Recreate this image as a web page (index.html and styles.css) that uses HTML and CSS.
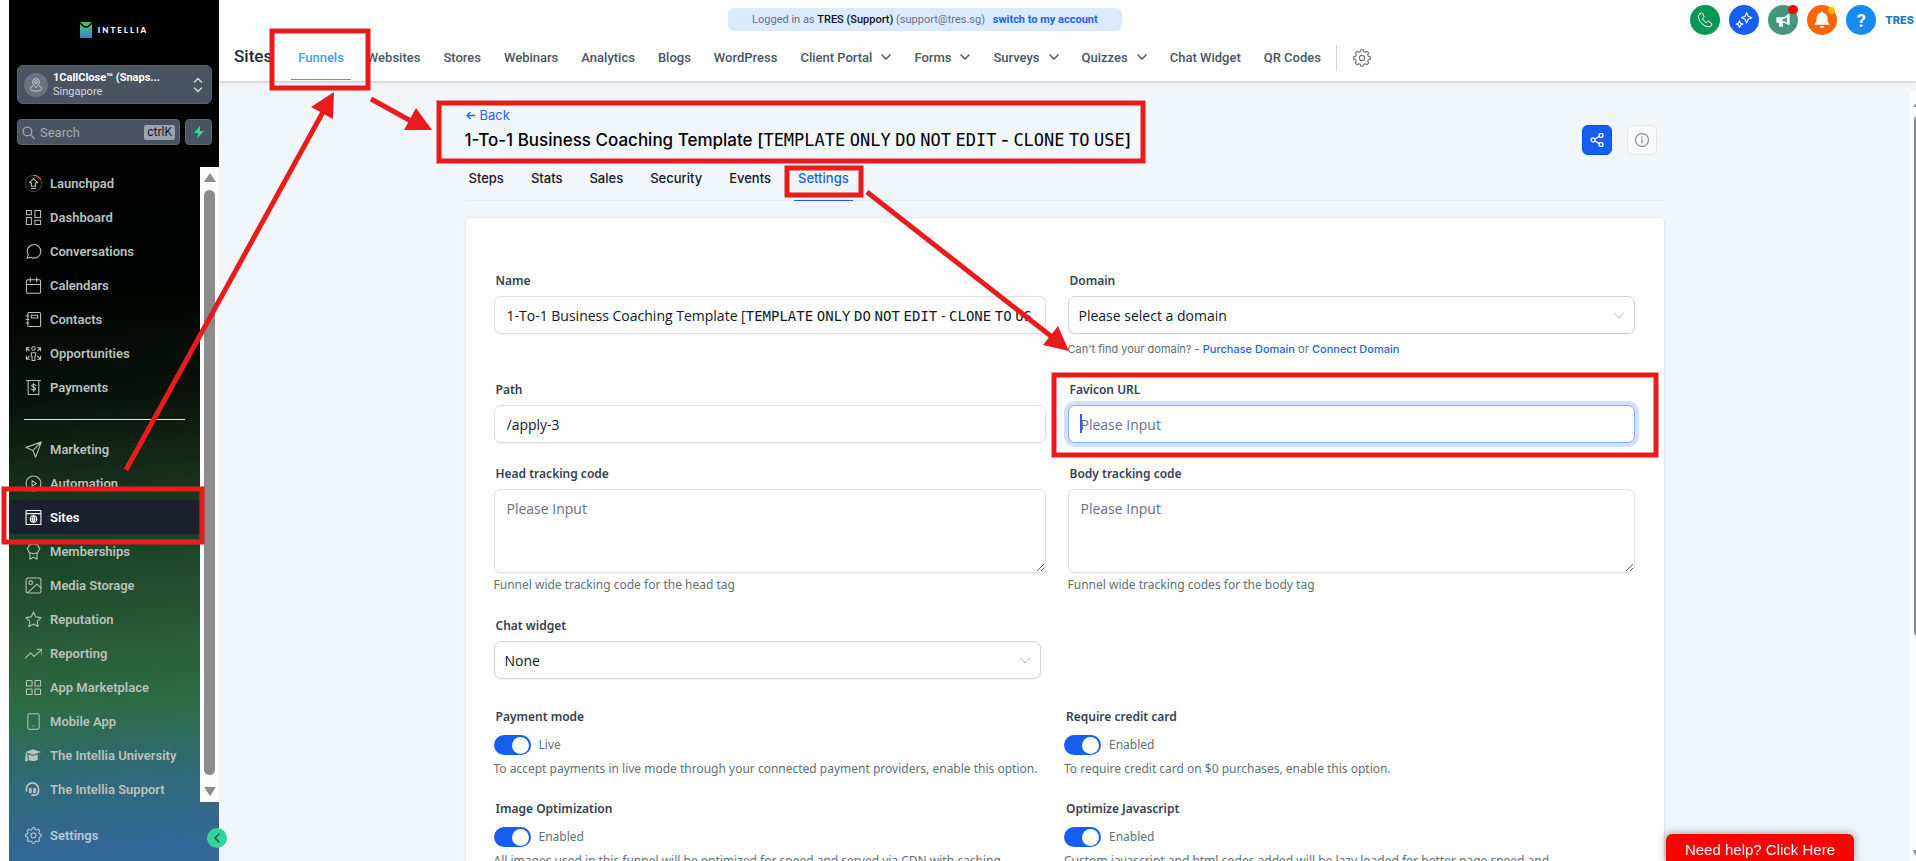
FILE: index.html
```
<!DOCTYPE html>
<html lang="en">
<head>
  <meta charset="UTF-8">
  <meta name="viewport" content="width=device-width, initial-scale=1.0">
  <title>Funnel Settings</title>
  <link rel="stylesheet" href="styles.css">
</head>
<body>
  <div class="app">
    <!-- Sidebar -->
    <aside class="sidebar">
      <div class="logo">
        <svg width="12" height="16" viewBox="0 0 12 16">
          <defs>
            <linearGradient id="logo-fill" x1="0" y1="0" x2="0" y2="1">
              <stop offset="0" stop-color="#4fc26b"/>
              <stop offset="1" stop-color="#3a7fd0"/>
            </linearGradient>
          </defs>
          <path d="M0 0h12l-4 4H4z" fill="#4cb96a"/>
          <path d="M0 2l4 3.500h4L12 2v14H0z" fill="url(#logo-fill)"/>
          <path d="M0 1l4 3.500h4L12 1" fill="none" stroke="#000"/>
        </svg>
        <span>INTELLIA</span>
      </div>

      <button class="account" type="button">
        <span class="account-pin">
          <svg class="icon" width="14" height="14" viewBox="0 0 24 24"><path d="M12 16s-6-4.500-6-9a6 6 0 0 1 12 0c0 4.500-6 9-6 9z"/><circle cx="12" cy="7" r="2.500"/><path d="M6.500 14C3.500 15 2 16.300 2 18c0 2.800 4.500 4.500 10 4.500S22 20.800 22 18c0-1.700-1.500-3-4.500-4"/></svg>
        </span>
        <span class="account-text">
          <strong>1CallClose™ (Snaps...</strong>
          <small>Singapore</small>
        </span>
        <svg class="icon account-arrows" width="10" height="16" viewBox="0 0 10 16"><path d="M1.500 5L5 1.500 8.500 5M1.500 11L5 14.500 8.500 11"/></svg>
      </button>

      <div class="search-row">
        <label class="search">
          <svg class="icon" width="13" height="13" viewBox="0 0 24 24"><circle cx="10" cy="10" r="8"/><path d="M16 16l7 7"/></svg>
          <input type="text" placeholder="Search" aria-label="Search">
          <kbd>ctrlK</kbd>
        </label>
        <button class="bolt" type="button" aria-label="Quick actions">
          <svg width="12" height="12" viewBox="0 0 12 12"><path d="M7 0L1 7h4l-.5 5L11 5H7z" fill="#34d399"/></svg>
        </button>
      </div>

      <div class="side-scroll">
        <nav class="side-nav">
          <a href="#"><svg class="icon" viewBox="0 0 24 24"><circle cx="12" cy="12" r="11.500" stroke="#3b3b3b"/><path d="M12 .5a11.500 11.500 0 0 1 10 6" stroke="#c9752d"/><path d="M12 5l6 6h-3v5H9v-5H6zM9 19h6"/></svg>Launchpad</a>
          <a href="#"><svg class="icon" viewBox="0 0 24 24"><path d="M2 2h7v6H2zM14 2h8v10h-8zM2 12h7v10H2zM14 16h8v6h-8z"/></svg>Dashboard</a>
          <a href="#"><svg class="icon" viewBox="0 0 24 24"><path d="M3 21.500l1.500-5A9.500 9.500 0 1 1 8 20z"/></svg>Conversations</a>
          <a href="#"><svg class="icon" viewBox="0 0 24 24"><rect x="2" y="4" width="20" height="19" rx="2"/><path d="M2 10.500h20M7.500 1v6M16.500 1v6"/></svg>Calendars</a>
          <a href="#"><svg class="icon" viewBox="0 0 24 24"><rect x="4" y="2" width="18" height="20" rx="1.500"/><rect x="9" y="6" width="9" height="4"/><path d="M1.500 7h4M1.500 12h4M1.500 17h4"/></svg>Contacts</a>
          <a href="#"><svg class="icon" viewBox="0 0 24 24"><circle cx="12" cy="5" r="2.500"/><path d="M9 11h6v5h-1v6h-4v-6H9zM2 8V4h4M2 4l4 4M22 8V4h-4M22 4l-4 4M2 16v4h4M2 20l4-4M22 16v4h-4M22 20l-4-4"/></svg>Opportunities</a>
          <a href="#"><svg class="icon" viewBox="0 0 24 24"><path d="M2 2h20M4.500 2v20h15V2M15 9c-.8-1.600-5.500-1.800-5.500.700 0 2.800 5.500 1.300 5.500 4 0 2.600-5 2.400-5.700.500M12.200 6.500v11"/></svg>Payments</a>
        </nav>
        <hr>
        <nav class="side-nav">
          <a href="#"><svg class="icon" viewBox="0 0 24 24"><path d="M1.500 9L23 1.500 15 23l-4-9.500zM11 13.500l12-12"/></svg>Marketing</a>
          <a href="#"><svg class="icon" viewBox="0 0 24 24"><circle cx="12" cy="12" r="10.500"/><path d="M10 8l6 4-6 4z"/></svg>Automation</a>
          <a href="#" class="active"><svg class="icon" viewBox="0 0 24 24"><path d="M1.500 2h21v20h-21zM1.500 6.500h21"/><circle cx="12" cy="14" r="4.500"/><path d="M7.500 14h9M12 9.500c-2 3-2 6 0 9M12 9.500c2 3 2 6 0 9"/></svg>Sites</a>
          <a href="#"><svg class="icon" viewBox="0 0 24 24"><path d="M12 1l3 1.500h3l1 3 2 2.500-2 3-1 3h-3l-3 1.500L9 14H6l-1-3-2-3 2-2.500 1-3h3zM7 14v9l5-3 5 3v-9"/></svg>Memberships</a>
          <a href="#"><svg class="icon" viewBox="0 0 24 24"><rect x="1.500" y="1.500" width="21" height="21" rx="3"/><circle cx="8" cy="8" r="2.500"/><path d="M4 22L17 10l5.500 5.500"/></svg>Media Storage</a>
          <a href="#"><svg class="icon" viewBox="0 0 24 24"><path d="M12 1.500l3.200 6.800 7.300 1-5.300 5.200 1.300 7.500-6.500-3.600L5.500 22l1.300-7.500L1.500 9.300l7.300-1z"/></svg>Reputation</a>
          <a href="#"><svg class="icon" viewBox="0 0 24 24"><path d="M0 19l8-8 5 5L24 6M17 6h7v7"/></svg>Reporting</a>
          <a href="#"><svg class="icon" viewBox="0 0 24 24"><rect x="2" y="2" width="8" height="8" rx="1"/><rect x="14" y="2" width="8" height="8" rx="1"/><rect x="2" y="14" width="8" height="8" rx="1"/><rect x="14" y="14" width="8" height="8" rx="1"/></svg>App Marketplace</a>
          <a href="#"><svg class="icon" viewBox="0 0 24 24"><rect x="4" y="1" width="16" height="22" rx="2.500"/><path d="M11.500 18h1"/></svg>Mobile App</a>
          <a href="#"><svg class="icon solid" viewBox="0 0 24 24"><path d="M11 3l12 4-12 4L1 7z"/><path d="M5 10.500l6 2 7-2V18c-3 2.500-10 2.500-13 0zM1 8h2l1 12H0z"/></svg>The Intellia University</a>
          <a href="#"><svg class="icon" viewBox="0 0 24 24"><path d="M2 14v-3a8.500 8.500 0 0 1 17 0v3c0 4-2 6-6 6h-3" stroke-width="2.500"/><path d="M7.500 11.500v4M13.500 11.500v4" stroke-width="4"/></svg>The Intellia Support</a>
        </nav>
        <div class="side-bar">
          <span class="bar-up"></span>
          <span class="bar-thumb"></span>
          <span class="bar-down"></span>
        </div>
      </div>

      <nav class="side-nav side-footer">
        <a href="#"><svg class="icon" viewBox="0 0 24 24"><circle cx="12" cy="12" r="3.500"/><path d="M9.700 3.500L10.500 1h3l.8 2.500 2 .9 2.400-1.300 2.200 2.200-1.300 2.400.9 2 2.500.8v3l-2.500.8-.9 2 1.300 2.400-2.200 2.200-2.400-1.300-2 .9-.8 2.500h-3l-.8-2.500-2-.9-2.400 1.300-2.200-2.200 1.300-2.400-.9-2L1 13.500v-3l2.500-.8.9-2-1.300-2.400 2.200-2.200 2.400 1.300z"/></svg>Settings</a>
      </nav>
      <button class="collapse" type="button" aria-label="Collapse sidebar">
        <svg class="icon" width="8" height="10" viewBox="0 0 8 10"><path d="M6 1L2 5l4 4"/></svg>
      </button>
    </aside>

    <div class="page">
      <!-- Header -->
      <header class="header">
        <div class="top-row">
          <p class="login-note">Logged in as <b>TRES (Support)</b> (support@tres.sg) <a href="#">switch to my account</a></p>
          <div class="actions">
            <button class="round green" type="button" aria-label="Phone"><svg class="icon" width="16" height="16" viewBox="0 0 24 24"><path d="M4 3l3-1.500c1 0 1.500.5 2 1.500l1.500 3.500c.3 1-.2 1.600-1 2.300-.8.700-1 1.200-.5 2.200 1 2 2.300 3.400 4.200 4.300 1 .5 1.500.2 2.200-.6.700-.8 1.300-1.200 2.300-.8L21 16.500c1 .5 1.500 1 1.300 2-.3 2-1.800 3.800-4.300 3.800C9.500 22 2 14 2 6c0-1.300.7-2.300 2-3z"/></svg></button>
            <button class="round blue" type="button" aria-label="AI"><svg class="icon" width="18" height="18" viewBox="0 0 24 24"><path d="M15.500 2l2 5 5 2-5 2-2 5-2-5-5-2 5-2zM6 13l1.300 3.200L10.500 17.500l-3.200 1.300L6 22l-1.300-3.200L1.500 17.500l3.200-1.300z"/></svg></button>
            <button class="round teal" type="button" aria-label="Announcements"><svg class="icon solid" width="16" height="16" viewBox="0 0 24 24"><path fill-rule="evenodd" d="M2 8h8c4 0 7-2 9-5h3v16h-3c-2-2-4-3-7-3v6H6v-6H2zM11 11v3c3 0 5 .7 7 2V8c-2 2-4 3-7 3z"/></svg><i class="dot red"></i></button>
            <button class="round orange" type="button" aria-label="Notifications"><svg class="icon solid" width="16" height="18" viewBox="0 0 24 26"><path d="M10 2a2 2 0 0 1 4 0c4 1 6 4 6 8 0 5 1 7 3 9v1H1v-1c2-2 3-4 3-9 0-4 2-7 6-8zM8.500 22.500h7c-.5 3-6.500 3-7 0z"/></svg><i class="dot yellow"></i></button>
            <button class="round sky" type="button" aria-label="Help">?</button>
            <span class="brand">TRES</span>
          </div>
        </div>
        <div class="nav-row">
          <h2>Sites</h2>
          <nav class="main-nav">
            <a href="#" class="active">Funnels</a>
            <a href="#">Websites</a>
            <a href="#">Stores</a>
            <a href="#">Webinars</a>
            <a href="#">Analytics</a>
            <a href="#">Blogs</a>
            <a href="#">WordPress</a>
            <a href="#">Client Portal <svg class="icon" width="10" height="7" viewBox="0 0 10 7"><path d="M1 1l4 4 4-4"/></svg></a>
            <a href="#">Forms <svg class="icon" width="10" height="7" viewBox="0 0 10 7"><path d="M1 1l4 4 4-4"/></svg></a>
            <a href="#">Surveys <svg class="icon" width="10" height="7" viewBox="0 0 10 7"><path d="M1 1l4 4 4-4"/></svg></a>
            <a href="#">Quizzes <svg class="icon" width="10" height="7" viewBox="0 0 10 7"><path d="M1 1l4 4 4-4"/></svg></a>
            <a href="#">Chat Widget</a>
            <a href="#">QR Codes</a>
          </nav>
          <button class="gear" type="button" aria-label="Site settings">
            <svg class="icon" width="18" height="18" viewBox="0 0 24 24"><circle cx="12" cy="12" r="3.500"/><path d="M9.700 3.500L10.500 1h3l.8 2.500 2 .9 2.400-1.300 2.200 2.200-1.300 2.400.9 2 2.500.8v3l-2.500.8-.9 2 1.300 2.400-2.200 2.200-2.400-1.300-2 .9-.8 2.500h-3l-.8-2.500-2-.9-2.400 1.300-2.200-2.200 1.300-2.400-.9-2L1 13.500v-3l2.500-.8.9-2-1.300-2.400 2.200-2.200 2.400 1.300z"/></svg>
          </button>
        </div>
      </header>

      <!-- Funnel -->
      <div class="scroller">
        <main class="content">
          <div class="title-row">
            <div>
              <a href="#" class="back"><svg class="icon" width="9" height="9" viewBox="0 0 9 9"><path d="M8.500 4.500H1M4 1.500l-3 3 3 3"/></svg>Back</a>
              <h1>1-To-1 Business Coaching Template [𝚃𝙴𝙼𝙿𝙻𝙰𝚃𝙴 𝙾𝙽𝙻𝚈 𝙳𝙾 𝙽𝙾𝚃 𝙴𝙳𝙸𝚃 - 𝙲𝙻𝙾𝙽𝙴 𝚃𝙾 𝚄𝚂𝙴]</h1>
            </div>
            <div class="title-buttons">
              <button class="square share" type="button" aria-label="Share"><svg class="icon" width="14" height="14" viewBox="0 0 14 14"><circle cx="3" cy="7" r="2"/><circle cx="11" cy="2.500" r="2"/><circle cx="11" cy="11.500" r="2"/><path d="M5 6l4-2.500M5 8l4 2.500"/></svg></button>
              <button class="square info" type="button" aria-label="Info"><svg class="icon" width="14" height="14" viewBox="0 0 14 14"><circle cx="7" cy="7" r="6.500"/><path d="M7 6.500v3.500M7 4v.5"/></svg></button>
            </div>
          </div>

          <nav class="tabs">
            <a href="#">Steps</a>
            <a href="#">Stats</a>
            <a href="#">Sales</a>
            <a href="#">Security</a>
            <a href="#">Events</a>
            <a href="#" class="active">Settings</a>
          </nav>

          <form class="card">
            <div class="fields">
              <div class="field">
                <label for="name">Name</label>
                <input id="name" type="text" value="1-To-1 Business Coaching Template [𝚃𝙴𝙼𝙿𝙻𝙰𝚃𝙴 𝙾𝙽𝙻𝚈 𝙳𝙾 𝙽𝙾𝚃 𝙴𝙳𝙸𝚃 - 𝙲𝙻𝙾𝙽𝙴 𝚃𝙾 𝚄𝚂𝙴]">
              </div>
              <div class="field">
                <label for="domain">Domain</label>
                <div class="select">
                  <select id="domain"><option>Please select a domain</option></select>
                  <svg class="icon" width="10" height="7" viewBox="0 0 10 7"><path d="M.5 1L5 6l4.500-5"/></svg>
                </div>
                <p class="domain-hint">Can't find your domain? - <a href="#">Purchase Domain</a> or <a href="#">Connect Domain</a></p>
              </div>
              <div class="field">
                <label for="path">Path</label>
                <input id="path" type="text" value="/apply-3">
              </div>
              <div class="field focused">
                <label for="favicon">Favicon URL</label>
                <div class="caret-box">
                  <input id="favicon" type="text" placeholder="Please Input">
                  <span class="caret"></span>
                </div>
              </div>
              <div class="field">
                <label for="head-code">Head tracking code</label>
                <textarea id="head-code" placeholder="Please Input"></textarea>
                <p class="hint">Funnel wide tracking code for the head tag</p>
              </div>
              <div class="field">
                <label for="body-code">Body tracking code</label>
                <textarea id="body-code" placeholder="Please Input"></textarea>
                <p class="hint">Funnel wide tracking codes for the body tag</p>
              </div>
            </div>

            <div class="options">
              <div class="field wide-row">
                <label for="chat">Chat widget</label>
                <div class="select">
                  <select id="chat"><option>None</option></select>
                  <svg class="icon" width="10" height="7" viewBox="0 0 10 7"><path d="M.5 1L5 6l4.500-5"/></svg>
                </div>
              </div>
              <div class="option">
                <label for="payment">Payment mode</label>
                <div class="toggle"><input id="payment" type="checkbox" checked><span>Live</span></div>
                <p class="hint">To accept payments in live mode through your connected payment providers, enable this option.</p>
              </div>
              <div class="option">
                <label for="card">Require credit card</label>
                <div class="toggle"><input id="card" type="checkbox" checked><span>Enabled</span></div>
                <p class="hint">To require credit card on $0 purchases, enable this option.</p>
              </div>
              <div class="option">
                <label for="image">Image Optimization</label>
                <div class="toggle"><input id="image" type="checkbox" checked><span>Enabled</span></div>
                <p class="hint">All images used in this funnel will be optimized for speed and served via CDN with caching</p>
              </div>
              <div class="option">
                <label for="javascript">Optimize Javascript</label>
                <div class="toggle"><input id="javascript" type="checkbox" checked><span>Enabled</span></div>
                <p class="hint">Custom javascript and html codes added will be lazy loaded for better page speed and</p>
              </div>
            </div>
          </form>
        </main>
        <div class="page-bar">
          <span class="bar-up"></span>
          <span class="bar-thumb"></span>
          <span class="bar-down"></span>
        </div>
      </div>
    </div>
  </div>

  <button class="help" type="button">Need help? Click Here</button>

  <!-- Step markers: Sites > Funnels > funnel title > Settings > Favicon URL -->
  <svg class="markers" width="1916" height="861" viewBox="0 0 1916 861" aria-hidden="true">
    <g fill="none" stroke="#e81c1c" stroke-width="5">
      <rect x="4" y="489" width="198" height="53"/>
      <rect x="272" y="31" width="96" height="57"/>
      <rect x="439" y="103" width="704" height="58"/>
      <rect x="787" y="168" width="74" height="27"/>
      <rect x="1054" y="375" width="602" height="80"/>
      <path d="M126 470L323 112M371 99L411 121M867 192L1052 337"/>
    </g>
    <g fill="#e81c1c">
      <path d="M334 92L311 107L333 119z"/>
      <path d="M432 130L416 108L404 130z"/>
      <path d="M1069 351L1058 326L1043 345z"/>
    </g>
  </svg>
</body>
</html>
```
FILE: styles.css
```
:root {
  --blue: #155eef;
  --link: #2563eb;
  --label: #344054;
  --muted: #607179;
  --border: #dcdfe4;
  --page: #f1f6fa;
  --bar: #8b8b8b;
}

* {
  margin: 0;
  padding: 0;
  box-sizing: border-box;
}

body {
  font-family: Roboto, "Liberation Sans", sans-serif;
  font-size: 13px;
  color: #111827;
  background: white;
  overflow: hidden;
}

a {
  text-decoration: none;
  color: inherit;
}

button {
  border: none;
  background: none;
  font: inherit;
}

.icon {
  fill: none;
  stroke: currentColor;
  stroke-width: 1.5;
  stroke-linecap: round;
  stroke-linejoin: round;
  flex-shrink: 0;
}

.icon.solid {
  fill: currentColor;
  stroke: none;
}

.app {
  display: flex;
  height: 100vh;
  padding-left: 9px;
}

/* Sidebar */
.sidebar {
  position: relative;
  z-index: 2;
  width: 210px;
  flex-shrink: 0;
  display: flex;
  flex-direction: column;
  background: linear-gradient(176deg, #000 0%, #020402 35%, #08120b 46%, #19361f 58%, #275a36 73%, #2d6c43 81%, #30697a 90%, #356798 98%);
}

.logo {
  display: flex;
  align-items: center;
  justify-content: center;
  gap: 6px;
  height: 65px;
  padding-bottom: 5px;
  color: white;
  font-family: Lato, sans-serif;
  font-size: 8px;
  font-weight: 900;
  letter-spacing: 2px;
}

.account {
  display: flex;
  align-items: center;
  gap: 5px;
  height: 39px;
  margin: 0 7px 0 8px;
  padding: 0 8px 0 6px;
  border: 1px solid #5a6371;
  border-radius: 6px;
  background: #4a5361;
  color: #d1d5db;
  text-align: left;
}

.account-pin {
  display: flex;
  align-items: center;
  justify-content: center;
  width: 24px;
  height: 24px;
  border-radius: 50%;
  background: #6b7280;
}

.account-text {
  flex: 1;
  line-height: 14px;
}

.account-text strong {
  display: block;
  font-size: 11px;
  font-weight: 700;
  color: white;
}

.account-text small {
  display: block;
  font-size: 11px;
}

.search-row {
  display: flex;
  gap: 5px;
  height: 26px;
  margin: 15px 7px 21px 8px;
}

.search,
.bolt {
  display: flex;
  align-items: center;
  border: 1px solid #5f6875;
  border-radius: 4px;
  background: #4a5361;
  color: #9ca3af;
}

.search {
  flex: 1;
  min-width: 0;
  gap: 5px;
  padding: 0 4px;
}

.search .icon {
  stroke-width: 2.500;
}

.search input {
  flex: 1;
  width: 0;
  min-width: 0;
  border: none;
  background: none;
  font-family: inherit;
  font-size: 13px;
  color: white;
}

.search input::placeholder {
  color: #a3abb8;
}

.search kbd {
  padding: 0 3px;
  border-radius: 2px;
  background: #9ca3af;
  color: #111827;
  font-family: inherit;
  font-size: 12px;
  line-height: 15px;
}

.bolt {
  width: 27px;
  flex-shrink: 0;
  justify-content: center;
}

.side-scroll {
  position: relative;
  flex: 1;
  min-height: 0;
  overflow: hidden;
  padding-right: 19px;
}

.side-nav a {
  display: flex;
  align-items: center;
  gap: 8px;
  height: 34px;
  padding-left: 16px;
  border-radius: 4px;
  color: #b9c2bd;
  font-size: 13px;
  font-weight: 600;
}

.side-nav .icon {
  width: 17px;
  height: 17px;
}

.side-nav a.active {
  background: #1b202e;
  color: white;
}

.side-scroll hr {
  margin: 15px 15px 12px;
  border: none;
  border-top: 1px solid #e5e7eb;
}

.side-footer {
  height: 59px;
  padding-top: 16px;
}

.side-footer a {
  color: #b7c8da;
}

.side-bar,
.page-bar {
  position: absolute;
  top: 0;
  right: 0;
  bottom: 0;
  display: flex;
  flex-direction: column;
  align-items: center;
  background: #fcfcfc;
}

.side-bar {
  top: 1px;
  width: 19px;
  padding: 6px 0;
}

.bar-up,
.bar-down {
  border: 6px solid transparent;
}

.bar-up {
  border-top: none;
  border-bottom: 9px solid var(--bar);
}

.bar-down {
  border-bottom: none;
  border-top: 9px solid var(--bar);
}

.bar-thumb {
  width: 11px;
  flex: 1;
  margin: 8px 0 12px;
  border-radius: 6px;
  background: var(--bar);
}

.collapse {
  position: absolute;
  right: -8px;
  bottom: 13px;
  display: flex;
  align-items: center;
  justify-content: center;
  width: 20px;
  height: 20px;
  border-radius: 50%;
  background: #34d399;
  color: #065f46;
}

/* Header */
.page {
  flex: 1;
  min-width: 0;
  display: flex;
  flex-direction: column;
  background: var(--page);
}

.header {
  position: relative;
  height: 81px;
  background: white;
  box-shadow: 0 1px 3px rgba(0, 0, 0, 0.2);
}

.top-row {
  display: flex;
  justify-content: space-between;
  height: 40px;
}

.login-note {
  height: 23px;
  margin: 8px 0 0 30%;
  padding: 0 24px;
  border-radius: 6px;
  background: #dbeafe;
  color: #64748b;
  font-size: 11px;
  line-height: 23px;
  white-space: nowrap;
}

.login-note b {
  font-weight: 500;
  color: #111827;
}

.login-note a {
  margin-left: 5px;
  font-weight: 700;
  color: var(--link);
}

.actions {
  display: flex;
  align-items: center;
  gap: 9px;
  height: 40px;
}

.round {
  position: relative;
  display: flex;
  align-items: center;
  justify-content: center;
  width: 30px;
  height: 30px;
  border-radius: 50%;
  color: white;
  font-size: 18px;
  font-weight: 700;
}

.round.green { background: #059855; }
.round.blue { background: #155eef; }
.round.teal { background: #45967d; }
.round.orange { background: #ff6600; }
.round.sky { background: #188bf6; }

.dot {
  position: absolute;
  top: 0;
  right: 0;
  width: 10px;
  height: 9px;
  border-radius: 50%;
}

.dot.red { background: #f00; }

.dot.yellow {
  top: 2px;
  right: 2px;
  width: 7px;
  height: 7px;
  background: #ffbc00;
}

.brand {
  padding-right: 2px;
  color: #1d7ac7;
  font-family: Inter, sans-serif;
  font-size: 11px;
  font-weight: 800;
}

.nav-row {
  display: flex;
  align-items: center;
  height: 41px;
  padding-left: 15px;
}

.nav-row h2 {
  padding-bottom: 9px;
  font-size: 17px;
  font-weight: 500;
  color: #1f2937;
}

.main-nav {
  display: flex;
  gap: 9px;
  margin-left: 19px;
}

.main-nav a {
  display: flex;
  align-items: center;
  gap: 9px;
  height: 39px;
  padding: 0 7px 5px;
  border-bottom: 1px solid transparent;
  color: #4b5563;
  font-weight: 500;
  white-space: nowrap;
}

.main-nav a.active {
  border-color: #3b9fdb;
  color: #3fa2dc;
}

.gear {
  display: flex;
  align-items: center;
  height: 26px;
  margin: 0 0 5px 8px;
  padding-left: 16px;
  border-left: 1px solid #cbd5e1;
  color: #6b7280;
}

/* Content */
.scroller {
  position: relative;
  flex: 1;
  min-height: 0;
  overflow: hidden;
  padding-right: 6px;
}

.content {
  width: 1200px;
  max-width: 96%;
  margin: 0 auto;
  padding-top: 25px;
  font-family: Inter, "DejaVu Sans Mono", sans-serif;
}

.title-row {
  display: flex;
  justify-content: space-between;
}

.back {
  display: flex;
  align-items: center;
  gap: 5px;
  padding-left: 1px;
  font-size: 13px;
  line-height: 18px;
  color: var(--link);
}

h1 {
  font-size: 17px;
  font-weight: 500;
  line-height: 24px;
  margin-top: 4px;
  color: #000;
}

.title-buttons {
  display: flex;
  gap: 15px;
  padding: 19px 8px 0 0;
}

.square {
  display: flex;
  align-items: center;
  justify-content: center;
  width: 30px;
  height: 30px;
  border-radius: 6px;
}

.square .icon {
  stroke-width: 1.300;
}

.square.share {
  border: 1px solid #004eeb;
  background: var(--blue);
  color: white;
}

.square.info {
  border: 1px solid #e1e5ea;
  background: #f9fafc;
  color: #8b95a3;
}

.tabs {
  display: flex;
  gap: 19px;
  margin-top: 11px;
  border-bottom: 1px solid #e8ebef;
}

.tabs a {
  height: 35px;
  margin-bottom: -1px;
  padding: 0 4px;
  border-bottom: 1px solid transparent;
  font-size: 13px;
  font-weight: 500;
  line-height: 25px;
}

.tabs a.active {
  border-color: var(--blue);
  color: var(--blue);
}

.card {
  margin-top: 16px;
  padding: 53px 29px 54px 28px;
  border: 1px solid #e5e9ee;
  border-radius: 5px;
  background: white;
  box-shadow: 0 1px 3px rgba(0, 0, 0, 0.06);
  font-family: "Noto Sans", sans-serif;
  white-space: nowrap;
}

.fields {
  display: grid;
  grid-template-columns: 552fr 567fr;
  column-gap: 22px;
}

.fields .field:nth-child(-n+2) { height: 109px; }
.fields .field:nth-child(3),
.fields .field:nth-child(4) { height: 84px; }

.field label,
.option label {
  display: block;
  padding-left: 2px;
  font-size: 12px;
  font-weight: 600;
  line-height: 19px;
  color: var(--label);
}

.field input,
.field select,
.field textarea {
  display: block;
  width: 100%;
  height: 38px;
  margin-top: 6px;
  padding: 0 12px;
  border: 1px solid var(--border);
  border-radius: 7px;
  background: white;
  box-shadow: 0 1px 2px rgba(16, 24, 40, 0.06);
  font-family: "Open Sans", "DejaVu Sans Mono", sans-serif;
  font-size: 14px;
  color: #101828;
  outline: none;
}

.field textarea {
  height: 84px;
  padding-top: 10px;
  line-height: 18px;
}

.field input::placeholder,
.field textarea::placeholder {
  color: #667085;
}

.field select {
  padding: 0 10px;
  border-color: #d0d5dd;
  appearance: none;
}

.select,
.caret-box {
  position: relative;
}

.select .icon {
  position: absolute;
  top: 16px;
  right: 11px;
  color: #b6bcc6;
  stroke-width: 1;
}

.field.focused input {
  border-color: #84adff;
  box-shadow: 0 0 0 4px #d1e0ff;
}

.caret {
  position: absolute;
  top: 9px;
  left: 12px;
  width: 2px;
  height: 19px;
  background: var(--link);
}

.domain-hint {
  margin-top: 6px;
  font-family: Inter, sans-serif;
  font-size: 11px;
  line-height: 18px;
  color: #5d6d73;
}

.domain-hint a {
  font-weight: 500;
  color: var(--link);
}

.hint {
  font-size: 12px;
  line-height: 18px;
  color: var(--muted);
}

.field .hint {
  margin-top: 3px;
}

.options {
  display: grid;
  grid-template-columns: minmax(0, 1fr) minmax(0, 1fr);
  margin-top: 22px;
}

.wide-row {
  grid-column: 1 / -1;
  width: 48%;
  margin-bottom: 28px;
}

.option {
  height: 92px;
}

.toggle {
  display: flex;
  align-items: center;
  gap: 8px;
  height: 21px;
  margin: 8px 0 5px;
  font-size: 12px;
  color: var(--muted);
}

.toggle input {
  appearance: none;
  width: 37px;
  height: 20px;
  padding: 2px;
  border-radius: 10px;
  background: var(--blue);
}

.toggle input::before {
  content: "";
  display: block;
  width: 17px;
  height: 17px;
  margin-left: auto;
  border-radius: 50%;
  background: white;
}

.page-bar {
  top: 10px;
  width: 6px;
  overflow: hidden;
  align-items: flex-start;
  padding: 11px 0 2px 3px;
}

.page-bar .bar-thumb {
  flex: 0 0 522px;
  margin: 8px 0 auto 1px;
}

.page-bar .bar-up {
  border-left-width: 4px;
  border-bottom-width: 5px;
}

.page-bar .bar-down {
  border-left-width: 4px;
}

.help {
  position: fixed;
  right: 62px;
  bottom: 0;
  z-index: 3;
  height: 27px;
  padding: 4px 19px 0;
  border-radius: 6px 6px 0 0;
  background: #f00;
  box-shadow: 0 0 10px rgba(0, 0, 0, 0.4);
  color: white;
  font-family: "Liberation Sans", Arial, sans-serif;
  font-size: 15px;
}

.markers {
  position: fixed;
  top: 0;
  left: 0;
  z-index: 10;
  pointer-events: none;
}
```
